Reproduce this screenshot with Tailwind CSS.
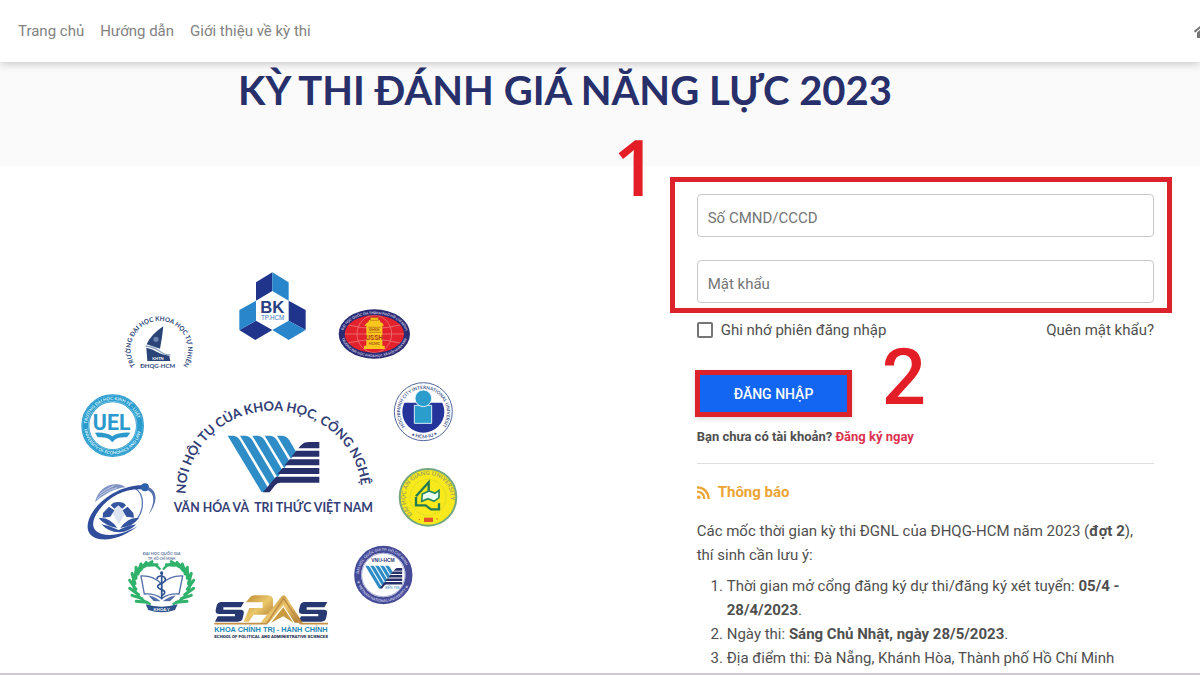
<!DOCTYPE html>
<html lang="vi">
<head>
<meta charset="utf-8">
<meta name="viewport" content="width=device-width, initial-scale=1">
<title>Kỳ thi đánh giá năng lực 2023</title>
<script src="https://cdn.jsdelivr.net/npm/@tailwindcss/browser@4"></script>
</head>
<body class="min-h-screen overflow-x-hidden bg-white font-['Roboto',sans-serif] text-[15px] leading-6 text-[#4f4f4f]">
<div class="flex h-screen flex-col overflow-hidden border-b-2 border-[#d0c8d6]">
  <header class="relative z-10 flex shrink-0 items-center justify-between bg-white py-[19px] pl-[18px] shadow-[0_2px_8px_rgba(0,0,0,0.2)]">
    <nav class="flex gap-4 text-[#828282]">
      <a href="#">Trang chủ</a>
      <a href="#">Hướng dẫn</a>
      <a href="#">Giới thiệu về kỳ thi</a>
    </nav>
    <a href="#" aria-label="Trang nhất" class="-mr-3 text-[#757575]">
      <svg class="block h-4 w-[18px]" viewBox="0 0 576 512" fill="currentColor"><path d="M280 148 96 300v164a16 16 0 0 0 16 16h112a16 16 0 0 0 16-16v-96a16 16 0 0 1 16-16h64a16 16 0 0 1 16 16v96a16 16 0 0 0 16 16h112a16 16 0 0 0 16-16V300L296 148a12 12 0 0 0-16 0zM572 251l-84-69V44a12 12 0 0 0-12-12h-56a12 12 0 0 0-12 12v72l-90-74a48 48 0 0 0-61 0L4 251a12 12 0 0 0-1 17l25 31a12 12 0 0 0 17 2L280 107a12 12 0 0 1 16 0l235 194a12 12 0 0 0 17-2l26-31a12 12 0 0 0-2-17z"/></svg>
    </a>
  </header>

  <div class="shrink-0 bg-[#fafafa] pr-[70px] pb-12">
    <h1 class="text-center font-['Lato','Open_Sans',sans-serif] text-[40px] leading-14 font-bold text-[#28306b]">KỲ THI ĐÁNH GIÁ NĂNG LỰC 2023</h1>
  </div>

  <main class="grid grid-cols-[4fr_3fr] pr-7">
    <section class="pt-[94px] pl-[70px]" aria-label="Các đơn vị thành viên">
      <svg class="w-[400px] max-w-full font-['Lato','Open_Sans',sans-serif]" viewBox="70 260 400 390" role="img" aria-label="Nơi hội tụ của khoa học, công nghệ, văn hóa và tri thức Việt Nam">
        <defs>
          <path id="arcMain" d="M77 327A264 250 0 0 1 605 327"/>
          <path id="arcSci" d="M77 317A86 86 0 1 1 219 317"/>
          <path id="arcUssh" d="M68 118A95 61 0 0 1 258 118"/>
          <path id="arcUsshLow" d="M64 118A99 68 0 0 0 262 118"/>
          <path id="arcIu" d="M255 395A70 70 0 1 1 366 395"/>
          <path id="arcIuLow" d="M262 414A80 80 0 0 0 358 414"/>
          <path id="arcUel" d="M51 137A77 77 0 0 1 205 137"/>
          <path id="arcUelLow" d="M42 137A86 86 0 0 0 214 137"/>
          <path id="arcAg" d="M218 178A68 68 0 1 1 310 178"/>
          <path id="arcVnu" d="M57 360A73 73 0 0 1 203 360"/>
          <path id="arcVnuLow" d="M49 360A81 81 0 0 0 211 360"/>
          <clipPath id="ribs"><path d="M195 150H385L414 193 320 322H300z"/></clipPath>
          <clipPath id="globe"><ellipse cx="163" cy="117" rx="89" ry="56"/></clipPath>
          <clipPath id="iuDisc"><circle cx="310" cy="350" r="63"/></clipPath>
          <linearGradient id="gold" x1="0" y1="0" x2="1" y2="1"><stop offset="0" stop-color="#b8862f"/><stop offset=".5" stop-color="#ecc76a"/><stop offset="1" stop-color="#a8742a"/></linearGradient>
          <g id="vMark">
            <g fill="#2e8dc6" clip-path="url(#ribs)">
              <path d="M203 152H220Q232 153 240 166L336 328H309z"/>
              <path d="M240 152H257Q269 153 277 166L373 328H346z"/>
              <path d="M277 152H294Q306 153 314 166L410 328H383z"/>
              <path d="M314 152H331Q343 153 351 166L447 328H420z"/>
              <path d="M351 152H368Q380 153 388 166L484 328H457z"/>
            </g>
            <g fill="#28306b">
              <path d="M478 171H447Q431 171 423 181L415 190H478z"/>
              <path d="M478 197H409L394 215H478z"/>
              <path d="M478 223H389L374 241H478z"/>
              <path d="M478 249H368L352 267H478z"/>
              <path d="M478 275H348L309 322H329L346 300Q352 293 362 293H478z"/>
            </g>
          </g>
        </defs>

        <!-- University of Science -->
        <g transform="translate(110 260) scale(.33333)" fill="#2b4478">
          <text font-size="19" font-weight="700"><textPath href="#arcSci">TRƯỜNG ĐẠI HỌC KHOA HỌC TỰ NHIÊN</textPath></text>
          <path d="M160 199C137 214 119 233 110 253L150 266Q157 232 160 199z"/>
          <path d="M109 263Q128 267 143 277Q154 284 178 287L181 303H112z"/>
          <path d="M107 258Q132 261 148 273T181 285" fill="none" stroke="#8da1c2" stroke-width="4"/>
          <circle cx="138" cy="238" r="8" fill="#6b83ae"/>
          <text x="144" y="300" font-size="12" font-weight="700" text-anchor="middle" fill="#fff">KHTN</text>
          <text x="143" y="325" font-size="18" font-weight="700" text-anchor="middle">ĐHQG-HCM</text>
        </g>

        <!-- Bach Khoa -->
        <g transform="translate(110 260) scale(.33333)">
          <path d="M438 67 487 37V93L438 122zM388 210 438 182 487 210 436 240zM536 122 587 150V210L536 182z" fill="#21348c"/>
          <path d="M487 37 536 67V122L487 93zM388 150 438 122V182L388 210zM536 182 587 210 536 240 487 210z" fill="#2a86cb"/>
          <text x="487" y="158" font-family="Liberation Sans" font-size="50" font-weight="700" text-anchor="middle" fill="#28407f">BK</text>
          <text x="488" y="180" font-family="Liberation Sans" font-size="19" text-anchor="middle" fill="#3a78b5">TP.HCM</text>
        </g>

        <!-- Social Sciences and Humanities -->
        <g transform="translate(320 295) scale(.33333)">
          <ellipse cx="163" cy="117" rx="107" ry="74" fill="#2b2c72"/>
          <ellipse cx="163" cy="117" rx="89" ry="56" fill="#e3222e"/>
          <g fill="none" stroke="#f08a86" stroke-width="2" clip-path="url(#globe)"><ellipse cx="163" cy="117" rx="52" ry="56"/><path d="M74 117H252M85 90Q163 110 241 90M85 144Q163 124 241 144"/></g>
          <path d="M140 84Q147 82 147 75H179Q179 82 187 84L192 92H187V152H194V162H132V152H139V92H133z" fill="#f8c61c"/>
          <path d="M151 68H175V76H151zM144 97H182M144 112H182" fill="#f8c61c" stroke="#b8661b" stroke-width="2"/>
          <text x="163" y="109" font-size="10" font-weight="700" text-anchor="middle" fill="#9b4a17">ĐHKH</text>
          <text x="163" y="135" font-family="Roboto" font-size="20" font-weight="700" text-anchor="middle" fill="#b33a16">USSH</text>
          <text x="163" y="151" font-size="11" font-weight="700" text-anchor="middle" fill="#9b4a17">HCMC</text>
          <g fill="#cfd0ea" font-size="10" font-weight="700"><text><textPath href="#arcUssh" startOffset="12">ĐẠI HỌC QUỐC GIA THÀNH PHỐ HỒ CHÍ MINH</textPath></text>
          <text><textPath href="#arcUsshLow" startOffset="12">TRƯỜNG ĐẠI HỌC KHOA HỌC XÃ HỘI NHÂN VĂN</textPath></text></g>
        </g>

        <!-- International University -->
        <g transform="translate(320 295) scale(.33333)">
          <circle cx="310" cy="350" r="87" fill="#fff" stroke="#53659c" stroke-width="3"/>
          <g clip-path="url(#iuDisc)"><path d="M245 323H375V420H245z" fill="#24349a"/></g>
          <path d="M283 331H335V385H283z" fill="#2b9dcc" stroke="#d8effa" stroke-width="3"/>
          <circle cx="310" cy="310" r="25" fill="#2b9dcc" stroke="#e6f4fa" stroke-width="3"/>
          <g fill="#46588f" font-weight="700"><text font-size="14"><textPath href="#arcIu">HOCHIMINH CITY INTERNATIONAL UNIVERSITY</textPath></text>
          <text font-size="15"><textPath href="#arcIuLow" startOffset="14">• HCM-IU •</textPath></text></g>
        </g>

        <!-- Economics and Law -->
        <g transform="translate(70 380) scale(.33333)">
          <circle cx="128" cy="137" r="82" fill="#fff" stroke="#2a9bcd" stroke-width="24"/>
          <circle cx="128" cy="137" r="91" fill="none" stroke="#8fcfe8" stroke-width="1"/>
          <circle cx="128" cy="137" r="73" fill="none" stroke="#8fcfe8" stroke-width="2"/>
          <text x="125" y="151" font-family="Roboto" font-size="64" font-weight="700" text-anchor="middle" fill="#2b99cc">UEL</text>
          <path d="M75 158Q108 156 127 169Q146 156 181 158L171 172Q146 170 136 178L127 187 118 178Q108 170 83 172z" fill="#2b99cc"/>
          <g fill="#d9f1fb" font-size="13" font-weight="700"><text><textPath href="#arcUel" startOffset="6">TRƯỜNG ĐẠI HỌC KINH TẾ - LUẬT</textPath></text>
          <text><textPath href="#arcUelLow" startOffset="10">UNIVERSITY OF ECONOMICS AND LAW</textPath></text></g>
        </g>

        <!-- Information Technology -->
        <g transform="translate(70 380) scale(.33333)">
          <path d="M75 366C84 329 113 309 145 313Q158 315 167 322C132 325 104 343 75 366z" fill="#7f93c3"/>
          <path d="M80 357Q105 333 141 323M88 343Q108 327 132 317" fill="none" stroke="#c2cce5" stroke-width="3"/>
          <path d="M194 324C225 342 225 392 195 424Q176 443 150 450" fill="none" stroke="#5f79b6" stroke-width="4"/>
          <path d="M222 316C170 313 105 343 70 393C42 434 47 472 93 478C133 482 179 459 203 438C171 458 128 471 96 462C61 452 63 422 88 389C120 346 168 324 222 328z" fill="#2f4d9b"/>
          <circle cx="225" cy="322" r="12" fill="#2e62ad"/>
          <path d="M234 320C266 334 262 370 235 405C253 371 257 343 234 331z" fill="#5570ae"/>
          <g fill="#34549f"><path d="M130 376 145 367 161 376 155 386 168 397 147 433 125 397 137 386z" fill="#dce4f3"/><path d="M122 376Q128 366 145 366T168 376L157 386 145 376 133 386zM99 399 117 380 133 391 121 410 98 413zM190 399 173 380 158 391 169 410 192 413zM86 415Q117 410 142 444Q109 440 86 415zM207 415Q176 410 151 444Q184 440 207 415z"/><path d="M94 433Q122 437 146 450Q171 437 199 433Q174 458 146 457Q117 457 94 433z"/></g>
        </g>

        <!-- VNU-HCM -->
        <g transform="translate(160 385) scale(.33333)">
          <text font-size="39" font-weight="700" fill="#333d75"><textPath href="#arcMain">NƠI HỘI TỤ CỦA KHOA HỌC, CÔNG NGHỆ</textPath></text>
          <use href="#vMark"/>
          <text x="340" y="382" font-size="37" font-weight="700" text-anchor="middle" fill="#333d75">VĂN HÓA VÀ&#160; TRI THỨC VIỆT NAM</text>
        </g>

        <!-- School of Medicine -->
        <g transform="translate(120 535) scale(.33333)">
          <text x="125" y="61" font-size="12" font-weight="700" text-anchor="middle" fill="#60779d">ĐẠI HỌC QUỐC GIA</text>
          <text x="125" y="75" font-size="10" font-weight="700" text-anchor="middle" fill="#60779d">TP. HỒ CHÍ MINH</text>
          <g id="laurel" fill="none" stroke="#30b26b">
            <path d="M121 104C100 75 57 82 42 122C31 158 50 190 92 208" stroke-width="7"/>
            <path d="M111 89 85 91M96 80 72 95M79 82 61 106M63 87 54 117M48 97 48 130M36 115 45 146M29 136 48 163M29 160 56 179M36 181 66 191M49 199 81 202" stroke-width="9" stroke-linecap="round"/>
          </g>
          <use href="#laurel" transform="matrix(-1 0 0 1 250 0)"/>
          <g fill="#fff" stroke="#536fa8" stroke-width="4"><path d="M63 123Q99 121 125 147V190Q102 174 73 177zM188 123Q151 121 125 147V190Q149 174 177 177z"/><path d="M87 182Q104 184 120 198H101zM166 182Q147 184 130 198H150z" fill="#536fa8" stroke-width="1"/></g>
          <path d="M125 114V193M111 133C111 119 133 121 136 132C139 145 112 144 113 155C115 166 137 162 134 174Q132 180 123 183" fill="none" stroke="#2f5290" stroke-width="5"/><circle cx="125" cy="114" r="5" fill="#2f5290"/>
          <path d="M77 208Q125 222 173 208L165 225Q125 238 85 225z" fill="#2d528c"/>
          <text x="125" y="227" font-size="13" font-weight="700" text-anchor="middle" fill="#fff">KHOA Y</text>
        </g>

        <!-- School of Political and Administrative Sciences -->
        <g transform="translate(120 535) scale(.33333)">
          <path d="M372 201 363 217H310V224H361Q374 224 371 237L368 250Q366 260 354 260H285L293 244H345V237H298Q285 237 287 225L290 212Q293 201 304 201z" fill="#26386f"/>
          <path d="M622 201 613 217H560V224H611Q624 224 621 237L618 250Q616 260 604 260H535L543 244H595V237H548Q535 237 537 225L540 212Q543 201 554 201z" fill="#26386f"/>
          <path d="M378 202 389 188Q394 181 405 181H438Q459 181 459 194V219Q459 236 438 239H401L386 260H371L388 219H428V202z" fill="url(#gold)"/>
          <path d="M422 263 485 184Q491 177 497 184L548 263H524L490 211 447 263z" fill="url(#gold)"/>
          <path d="M453 263 490 217 520 263 490 244z" fill="#c99a3f"/>
          <path d="M283 266H440L491 190 541 266H624" fill="none" stroke="#c38f49" stroke-width="5"/>
          <text x="453" y="291" font-family="Liberation Sans" font-size="22" font-weight="700" text-anchor="middle" fill="#1c86b4">KHOA CHÍNH TRỊ - HÀNH CHÍNH</text>
          <text x="453" y="309" font-family="Roboto" font-size="13" font-weight="900" text-anchor="middle" fill="#263354">SCHOOL OF POLITICAL AND ADMINISTRATIVE SCIENCES</text>
        </g>

        <!-- An Giang University -->
        <g transform="translate(340 455) scale(.33333)">
          <circle cx="264" cy="127" r="85" fill="#f7e91c" stroke="#74a77f" stroke-width="6"/>
          <circle cx="264" cy="127" r="54" fill="none" stroke="#d7d52b" stroke-width="2"/>
          <text font-size="18" font-weight="700" fill="#a3a65b"><textPath href="#arcAg">ĐẠI HỌC AN GIANG UNIVERSITY</textPath></text>
          <path d="M228 124 266 82V111" fill="none" stroke="#247a53" stroke-width="7"/>
          <path d="M247 117 267 108 285 115 297 106V128L282 139 264 131 245 139z" fill="#e9fff2" stroke="#2a8a5e" stroke-width="5"/>
          <path d="M228 126V151H257L273 163H297V145" fill="none" stroke="#247a53" stroke-width="7"/>
          <path d="M252 188H279V201H252z" fill="#e4532c"/><path d="M236 192h4v4h-4zM289 190h4v4h-4z" fill="#e4782c"/>
        </g>

        <!-- VNU-HCM member seal -->
        <g transform="translate(340 455) scale(.33333)">
          <circle cx="130" cy="360" r="77" fill="#fff" stroke="#454b97" stroke-width="21"/>
          <circle cx="130" cy="360" r="65" fill="none" stroke="#8186bd" stroke-width="2"/>
          <text x="129" y="322" font-family="Liberation Sans" font-size="15" font-weight="700" text-anchor="middle" fill="#343c7c">VNU-HCM</text>
          <use href="#vMark" transform="translate(-7 270) scale(.405)"/>
          <text x="158" y="402" font-size="11" text-anchor="middle" fill="#3f87b8">BẾN TRE</text>
          <g fill="#c9cbea" font-size="11" font-weight="700"><text><textPath href="#arcVnu" startOffset="4">ĐẠI HỌC QUỐC GIA TP. HỒ CHÍ MINH</textPath></text>
          <text><textPath href="#arcVnuLow" startOffset="18">★ VIETNAM NATIONAL UNIVERSITY ★</textPath></text></g>
        </g>
      </svg>
    </section>

    <section class="relative pt-[11px]">
      <form>
        <div class="flex flex-col gap-[23px] border-5 border-[#dc222a] pt-3 pr-[13px] pb-[5px] pl-[22px]">
          <input type="text" aria-label="Số CMND/CCCD" placeholder="Số CMND/CCCD" class="h-[43px] w-full rounded border border-[#c8c8c8] bg-white px-2.5 pt-1 placeholder:text-[#757575]">
          <input type="password" aria-label="Mật khẩu" placeholder="Mật khẩu" class="h-[43px] w-full rounded border border-[#c8c8c8] bg-white px-2.5 pt-1 placeholder:text-[#757575]">
        </div>
        <span aria-hidden="true" class="absolute top-[-45px] left-[-57px] font-['Open_Sans',sans-serif] text-[78px] leading-[90px] font-semibold text-[#e41e26]">1</span>
        <div class="mt-[5px] flex items-center justify-between pr-[18px] pl-[27px]">
          <label class="flex items-center gap-2"><input type="checkbox" class="size-4 appearance-none rounded-xs border-2 border-[#757575] bg-white">Ghi nhớ phiên đăng nhập</label>
          <a href="#">Quên mật khẩu?</a>
        </div>
        <div class="relative mt-7 ml-[25px] w-fit">
          <button type="submit" class="block h-[47px] border-5 border-[#dc222a] bg-[#1266f1] px-[34px] text-sm font-medium text-white shadow-[0_2px_5px_rgba(0,0,0,0.15)]">ĐĂNG NHẬP</button>
          <span aria-hidden="true" class="absolute top-[-37px] left-[187px] text-[78px] leading-[90px] font-medium text-[#e41e26]">2</span>
        </div>
      </form>
      <div class="pr-[18px] pl-[27px]">
        <p class="mt-2.5 text-[13px] leading-5 font-bold">Bạn chưa có tài khoản? <a href="#" class="text-[#dc3050]">Đăng ký ngay</a></p>
        <hr class="mt-4 border-t-1 border-[#dedede]">
        <h2 class="mt-4 flex items-center gap-2 font-bold text-[#eba534]">
          <svg class="size-[13px]" viewBox="0 0 13 13" fill="none" stroke="currentColor" stroke-width="2.3" aria-hidden="true"><circle cx="1.8" cy="11.2" r="1.8" fill="currentColor" stroke="none"/><path d="M0 5.6Q7 6 7.4 13M0 1.3Q11 1.8 11.7 13"/></svg>
          Thông báo
        </h2>
        <p class="mt-[15px] pr-3">Các mốc thời gian kỳ thi ĐGNL của ĐHQG-HCM năm 2023 (<b>đợt 2</b>), thí sinh cần lưu ý:</p>
        <ol class="mt-[7px] list-decimal pl-[30px]">
          <li>Thời gian mở cổng đăng ký dự thi/đăng ký xét tuyển: <b>05/4 - 28/4/2023</b>.</li>
          <li>Ngày thi: <b>Sáng Chủ Nhật, ngày 28/5/2023</b>.</li>
          <li>Địa điểm thi: Đà Nẵng, Khánh Hòa, Thành phố Hồ Chí Minh</li>
        </ol>
      </div>
    </section>
  </main>
</div>
</body>
</html>
